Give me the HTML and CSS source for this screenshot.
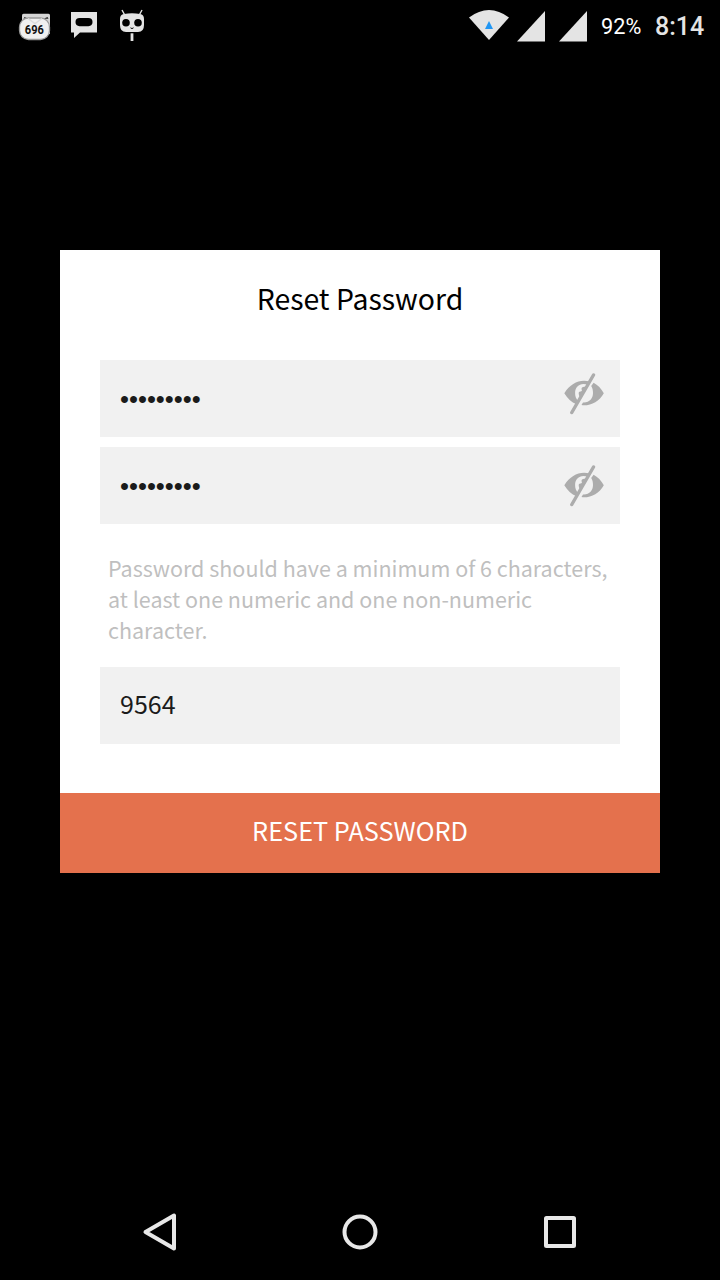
FILE: index.html
```html
<!DOCTYPE html>
<html lang="en">
<head>
<meta charset="utf-8">
<title>Reset Password</title>
<link rel="stylesheet" href="styles.css">
</head>
<body>
<svg class="defs" width="0" height="0" aria-hidden="true">
  <symbol id="eye-off" viewBox="0 0 40 42">
    <path fill="#acacac" d="M.3 20.200C5.500 12 12.500 7.700 20 7.700c2 0 4 .3 5.800.9l-1.700 3.600c-7-3.300-13 1-13 7.800 0 3.400 1 5.900 3 8l-1.600 3.200C7.500 29.300 3.300 25.300.3 20.200z"/>
    <path fill="#acacac" d="M29.600 9.800c4.200 2.200 7.700 5.800 10.200 10.400C35.500 28 28 32.300 20 32.300c-.9 0-1.700-.1-2.500-.2l1.500-2.700c6.200.5 10-3.700 10-9.400 0-3-.6-5.300-1.800-7.100z"/>
    <path fill="#acacac" d="M22 14c-3.400-.8-5.300 1.100-4.200 3.100.5 1-.5 1.600-1.500 1.400-1.100 0-1.700.8-1.600 2 .1 1.800.8 3.300 2 4.500z"/>
    <path fill="none" stroke="#acacac" stroke-width="3.400" stroke-linecap="round" d="M29.500 2 7.800 39.500"/>
  </symbol>
</svg>
<div class="screen">
  <header class="status">
    <div class="notices">
      <svg width="34" height="32" viewBox="18 10 34 32">
        <path fill="#d5d5d5" d="M23.500 13.800h25q1.500 0 1.500 1.500V34H22V15.300q0-1.500 1.500-1.500z"/>
        <path fill="#222" d="m24.500 17 4 1.700h-5zM47.500 17l-4 1.700h5z"/>
        <rect x="19.500" y="18" width="30" height="21.500" rx="9" fill="#f0f0f0" stroke="#999" stroke-width="1.300"/>
        <path fill="none" stroke="#dcdcdc" stroke-width="1.500" d="m28 18.500 7 5 7-5"/>
        <text class="count" x="34.300" y="34" text-anchor="middle" textLength="19" lengthAdjust="spacingAndGlyphs">696</text>
      </svg>
      <svg width="28" height="28" viewBox="70 11 28 28">
        <path fill="#e4e4e4" d="M71 12h26v20.500H80L74 38v-5.500h-3z"/>
        <rect x="75.500" y="18" width="17" height="8.200" rx="4.100"/>
      </svg>
      <svg width="28" height="34" viewBox="118 9 28 34">
        <path stroke="#e4e4e4" stroke-width="1.400" d="m122 10 3 5.500M142 10l-3 5.500"/>
        <path fill="#e4e4e4" d="M124 14q8-1.500 16 0 4 .5 4 5v6q0 7-6 7h-12q-6 0-6-7v-6q0-4.500 4-5z"/>
        <circle cx="126" cy="22.800" r="3.800"/><circle cx="138" cy="22.800" r="3.800"/>
        <path fill="none" stroke="#000" d="m130.500 27.800 1.500.8 1.500-.8"/>
        <path fill="#e4e4e4" d="M130.600 33.300h2.800V41h-2.800z"/>
      </svg>
    </div>
    <div class="system">
      <svg width="40" height="32" viewBox="469 9 40 32">
        <path fill="#e4e4e4" d="M469 17.500q20-15 40 0L489 40z"/>
        <path fill="#2196f3" d="m489 21 4 8h-8z"/>
      </svg>
      <svg class="signal" width="28" height="31" viewBox="0 0 28 31"><path fill="#e4e4e4" d="M28 0v30.500H0z"/></svg>
      <svg class="signal second" width="28" height="31" viewBox="0 0 28 31"><path fill="#e4e4e4" d="M28 0v30.500H0z"/></svg>
      <span class="battery">92%</span>
      <span class="clock">8:14</span>
    </div>
  </header>
  <main class="dialog">
    <h1 class="title">Reset Password</h1>
    <div class="form">
      <div class="field"><span class="dots">•••••••••</span><svg class="eye" width="40" height="42"><use href="#eye-off"/></svg></div>
      <div class="field"><span class="dots">•••••••••</span><svg class="eye lower" width="40" height="42"><use href="#eye-off"/></svg></div>
      <p class="hint">Password should have a minimum of 6 characters,<br>at least one numeric and one non-numeric<br>character.</p>
      <div class="field"><span class="code">9564</span></div>
    </div>
    <button class="submit">RESET PASSWORD</button>
  </main>
  <nav class="nav">
    <svg width="40" height="40" viewBox="0 0 40 40"><path d="M34 3.500v33L5.500 20z"/></svg>
    <svg width="40" height="40" viewBox="0 0 40 40"><circle cx="20" cy="20" r="15.500"/></svg>
    <svg width="40" height="40" viewBox="0 0 40 40"><rect x="6" y="6" width="28" height="28" rx=".5"/></svg>
  </nav>
</div>
</body>
</html>
```
FILE: styles.css
```css
* { box-sizing: border-box; }
body { margin: 0; background: #000; font-family: "Noto Sans CJK SC", "Noto Sans", sans-serif; }
.defs { display: block; position: absolute; }
svg { display: block; flex: none; }
.screen { width: 720px; height: 1280px; display: flex; flex-direction: column; }
.status { height: 50px; display: flex; justify-content: space-between; padding: 9px 15px 0 18px; font-family: Roboto, sans-serif; }
.notices { display: flex; gap: 18px; }
.notices svg:first-child { margin-top: 1px; }
.notices svg:nth-child(2) { margin-top: 2px; }
.notices svg:nth-child(3) { margin-left: 2px; }
.count { font: 700 12px Roboto, sans-serif; fill: #111; }
.system { display: flex; }
.signal { margin: 2px 0 0 8px; }
.second { margin-left: 14px; }
.battery { margin-left: 14px; width: 40px; font-size: 21.7px; line-height: 36px; color: #fff; white-space: nowrap; }
.clock { margin-left: 14px; width: 50px; font-size: 25px; font-weight: 500; line-height: 35px; color: #e4e4e4; white-space: nowrap; }
.dialog { width: 600px; height: 623px; margin: 200px 60px 0; background: #fff; display: flex; flex-direction: column; }
.title { margin: 0; height: 110px; line-height: 96px; font-size: 28.4px; font-weight: 400; text-align: center; color: #000; }
.form { padding: 0 40px; display: flex; flex-direction: column; flex: 1; }
.field { height: 77px; margin-bottom: 10px; padding: 0 16px 0 20px; background: #f1f1f1; color: #1b1b1b; display: flex; justify-content: space-between; font-size: 25px; line-height: 75px; }
.dots { font-family: "Liberation Sans", sans-serif; font-size: 25.6px; line-height: 79px; }
.code { line-height: 73px; }
.eye { margin-top: 12.500px; }
.lower { margin-top: 17.500px; }
.hint { margin: 18px 8px 22px; font-size: 21.5px; line-height: 31px; color: #bfbfbf; white-space: nowrap; }
.submit { border: 0; padding: 0 0 5px; height: 80px; background: #e4714d; color: #fff; font: 25.3px/75px "Noto Sans CJK SC", sans-serif; }
.nav { margin-top: auto; height: 96px; padding: 0 140px; display: flex; justify-content: space-between; align-items: center; }
.nav svg { fill: none; stroke: #e8e8e8; stroke-width: 4; stroke-linejoin: round; }
```
